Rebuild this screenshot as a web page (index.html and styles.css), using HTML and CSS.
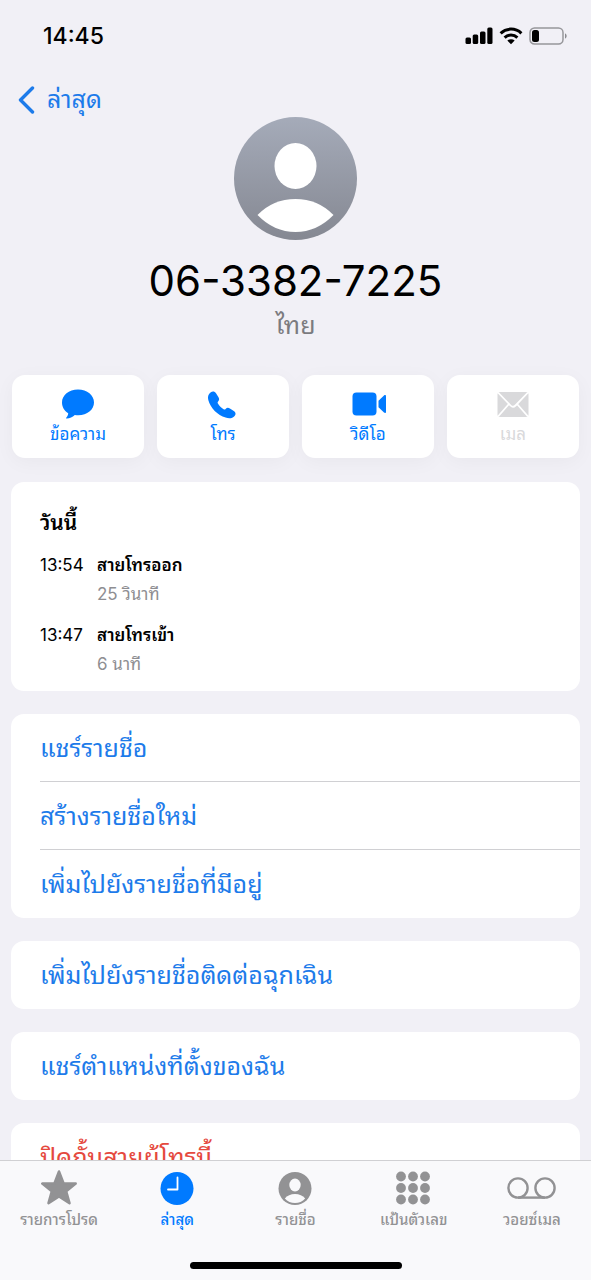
FILE: index.html
```html
<!DOCTYPE html>
<html lang="th">
<head>
<meta charset="utf-8">
<meta name="viewport" content="width=device-width, initial-scale=1">
<title>06-3382-7225</title>
<link rel="stylesheet" href="styles.css">
</head>
<body>
<div class="screen">
  <header class="status">
    <time class="clock">14:45</time>
    <div class="status-icons">
      <svg width="28" height="18" viewBox="0 0 28 18"><rect x="0.500" y="10.500" width="5.500" height="6.500" rx="1.500"/><rect x="7.700" y="7.500" width="5.500" height="9.500" rx="1.500"/><rect x="15" y="4.500" width="5.500" height="12.500" rx="1.500"/><rect x="22.300" y="0.500" width="5.200" height="16.500" rx="1.500"/></svg>
      <svg width="24" height="18" viewBox="0 0 24 18"><g fill="none" stroke="#000" stroke-width="3"><path d="M1.600 6.300a15 15 0 0 1 20.800 0"/><path d="M5.600 10.600a9.200 9.200 0 0 1 12.800 0"/></g><path d="M8.300 13.600a5.400 5.400 0 0 1 7.400 0L12 17.300z"/></svg>
      <svg width="39" height="18" viewBox="0 0 39 18"><rect x="1" y="1" width="33" height="16" rx="4.500" fill="none" stroke="#96969a" stroke-width="1.500"/><rect x="3" y="3" width="7" height="12" rx="2.500"/><path d="M36 6.500c2.200.6 2.200 4.400 0 5z" fill="#8c8c90"/></svg>
    </div>
  </header>

  <main class="content">
    <nav class="nav">
      <a class="back" href="#recents"><svg width="18" height="28" viewBox="0 0 18 28"><path d="M15.500 2 3.500 14l12 12" fill="none" stroke="#1d7bea" stroke-width="3.400" stroke-linecap="round" stroke-linejoin="round"/></svg>ล่าสุด</a>
    </nav>

    <section class="profile">
      <svg class="avatar" viewBox="0 0 123 123"><defs><linearGradient id="shade" x1="0" y1="0" x2="0" y2="1"><stop offset="0" stop-color="#a5abb9"/><stop offset="1" stop-color="#858892"/></linearGradient></defs><circle cx="61.500" cy="61.500" r="61.500" fill="url(#shade)"/><ellipse cx="61.500" cy="49" rx="21" ry="23" fill="#fff"/><path d="M23.500 98Q39 82 61.500 82T99.500 98Q83 115 61.500 115T23.500 98z" fill="#fff"/></svg>
      <h1 class="number">06-3382-7225</h1>
      <p class="country">ไทย</p>
    </section>

    <section class="actions">
      <button class="action" type="button"><svg width="36" height="32" viewBox="0 0 36 32"><path fill="currentColor" d="M18 1.500c9.200 0 16 5.800 16 13s-6.800 12.700-15.700 12.700c-1.200 0-2.400 0-3.500-.3-2.400 2.200-5 3.500-8 3.700-.8 0-1-.6-.4-1.200 1.100-1.300 1.700-2.500 1.800-4.200C4.400 22.900 2 19 2 14.500c0-7.200 6.800-13 16-13z"/></svg>ข้อความ</button>
      <button class="action" type="button"><svg width="36" height="32" viewBox="0 0 36 32"><path fill="currentColor" d="M5.500 4.600C7.600 3 9.700 3.400 11 5.300l2.500 3.900c1 1.700.8 3-.4 4.300-.6.700-.6 1.300-.2 2 1.500 2.500 3.300 4.300 5.700 5.700.8.500 1.400.4 2-.2 1.300-1.300 2.600-1.500 4.300-.5l3.900 2.400c2 1.300 2.300 3.200.8 5-2.100 2.500-5.300 2.900-9 1.700C12.500 27 5.500 20.200 3.300 12 2.500 8.900 3.200 6.300 5.500 4.600z"/></svg>โทร</button>
      <button class="action" type="button"><svg width="36" height="32" viewBox="0 0 36 32"><rect x="2.500" y="4.500" width="24" height="23" rx="4" fill="currentColor"/><path fill="currentColor" d="M28.500 12.800l5.500-5.400c1.100-.9 2-.4 2 .8v15.600c0 1.200-.9 1.700-2 .8l-5.500-5.400z"/></svg>วิดีโอ</button>
      <button class="action" type="button" disabled><svg width="36" height="32" viewBox="0 0 36 32"><rect x="2.500" y="4" width="31" height="25" rx="2.500" fill="currentColor"/><path d="M3 4.500 15.500 17.500q2.500 2.500 5 0L33 4.500M3 28.500 13.500 16.500M33 28.500 22.500 16.500" fill="none" stroke="#fff" stroke-width="1.800"/></svg>เมล</button>
    </section>

    <section class="card log">
      <h2 class="log-title">วันนี้</h2>
      <dl class="calls">
        <dt>13:54</dt>
        <dd><strong>สายโทรออก</strong><span>25 วินาที</span></dd>
        <dt>13:47</dt>
        <dd><strong>สายโทรเข้า</strong><span>6 นาที</span></dd>
      </dl>
    </section>

    <section class="card">
      <button class="row" type="button">แชร์รายชื่อ</button>
      <button class="row" type="button">สร้างรายชื่อใหม่</button>
      <button class="row" type="button">เพิ่มไปยังรายชื่อที่มีอยู่</button>
    </section>
    <section class="card"><button class="row" type="button">เพิ่มไปยังรายชื่อติดต่อฉุกเฉิน</button></section>
    <section class="card"><button class="row" type="button">แชร์ตำแหน่งที่ตั้งของฉัน</button></section>
    <section class="card"><button class="row danger" type="button">ปิดกั้นสายผู้โทรนี้</button></section>
  </main>

  <footer class="dock">
    <nav class="tabs">
      <a class="tab" href="#favorites"><svg width="50" height="36" viewBox="0 0 50 36"><path fill="currentColor" stroke="currentColor" stroke-width="2.500" stroke-linejoin="round" d="M25 1.500L29.500 13.200L41.700 13.600L32.200 21.400L35.500 33.200L25 26.500L14.500 33.200L17.800 21.400L8.300 13.600L20.500 13.200z"/></svg>รายการโปรด</a>
      <a class="tab current" href="#recents" aria-current="page"><svg width="50" height="36" viewBox="0 0 50 36"><circle cx="25" cy="18.500" r="16.500" fill="currentColor"/><path d="M25.500 7.500v12h-9.500" fill="none" stroke="#fff" stroke-width="1.800" stroke-linecap="round" stroke-linejoin="round"/></svg>ล่าสุด</a>
      <a class="tab" href="#contacts"><svg width="50" height="36" viewBox="0 0 50 36"><circle cx="25" cy="18.500" r="16.500" fill="currentColor"/><ellipse cx="25" cy="15" rx="5.700" ry="6.500" fill="#f9f9fb"/><path d="M14.800 28.500Q18.500 24 25 24t10.200 4.500Q31 33 25 33t-10.200-4.500z" fill="#f9f9fb"/></svg>รายชื่อ</a>
      <a class="tab" href="#keypad"><svg width="50" height="36" viewBox="0 0 50 36"><g fill="currentColor"><circle cx="12" cy="6.500" r="4.900"/><circle cx="24" cy="6.500" r="4.900"/><circle cx="36" cy="6.500" r="4.900"/><circle cx="12" cy="18" r="4.900"/><circle cx="24" cy="18" r="4.900"/><circle cx="36" cy="18" r="4.900"/><circle cx="12" cy="29.500" r="4.900"/><circle cx="24" cy="29.500" r="4.900"/><circle cx="36" cy="29.500" r="4.900"/></g></svg>แป้นตัวเลข</a>
      <a class="tab" href="#voicemail"><svg width="50" height="36" viewBox="0 0 50 36"><g fill="none" stroke="currentColor" stroke-width="2.400"><circle cx="11" cy="18" r="9.600"/><circle cx="38" cy="18" r="9.600"/><path d="M11 27.600h27"/></g></svg>วอยซ์เมล</a>
    </nav>
    <div class="home"></div>
  </footer>
</div>
</body>
</html>
```
FILE: styles.css
```css
* { box-sizing: border-box; }
body {
  margin: 0;
  background: #f1f0f6;
  color: #000;
  font-family: Inter, "Noto Sans Thai Looped", Loma, Garuda, "Noto Sans Thai", "Noto Sans", sans-serif;
}
button { border: 0; font: inherit; cursor: pointer; }
a { text-decoration: none; }
h1, h2, p, dl, dd { margin: 0; }
svg { display: block; flex: none; }

.screen { display: flex; flex-direction: column; height: 100vh; }
.status {
  flex: none;
  display: flex;
  align-items: center;
  justify-content: space-between;
  height: 72px;
  padding: 0 23px 0 43px;
}
.clock { font-size: 23px; font-weight: 500; line-height: 28px; }
.status-icons { display: flex; gap: 6px; }

.content {
  flex: 1;
  min-height: 0;
  overflow-y: auto;
  scrollbar-width: none;
  padding: 0 11px;
}
.nav { display: flex; height: 45px; align-items: center; padding: 10px 6px 0; }
.back {
  display: flex;
  align-items: center;
  gap: 12px;
  color: #1d7bea;
  font-size: 25px;
  line-height: 35px;
}

.profile { display: flex; flex-direction: column; align-items: center; }
.avatar { width: 123px; height: 123px; }
.number { margin-top: 15px; font-size: 42px; font-weight: 400; line-height: 52px; }
.country { color: #7b7b7f; font-size: 25px; line-height: 36px; }

.actions { display: grid; grid-template-columns: repeat(4, 1fr); gap: 13px; margin: 32px 1px 24px; }
.action {
  display: flex;
  flex-direction: column;
  align-items: center;
  height: 83px;
  padding: 13px 0 0;
  border-radius: 13px;
  background: #fff;
  box-shadow: 0 4px 20px rgb(0 0 0 / 4%);
  color: #007aff;
  font-size: 17px;
  line-height: 28px;
}
.action:disabled { color: #d9d9db; cursor: default; }

.card { margin-bottom: 23px; border-radius: 13px; background: #fff; overflow: hidden; }
.log { padding: 22px 29px 13px; }
.log-title { font-size: 21px; font-weight: 600; line-height: 38px; }
.calls { display: grid; grid-template-columns: 57px 1fr; row-gap: 13px; margin-top: 9px; line-height: 28px; font-size: 17px; }
.calls strong, .calls span { display: block; }
.calls strong { font-weight: 600; }
.calls span { padding-top: 1px; color: #8e8e92; }

.row {
  display: block;
  position: relative;
  width: 100%;
  height: 68px;
  padding: 0 29px;
  background: none;
  color: #1d7bea;
  font-size: 25px;
  line-height: 36px;
  text-align: left;
}
.row:not(:last-child)::after {
  content: "";
  position: absolute;
  bottom: 0;
  left: 29px;
  right: 0;
  height: 1px;
  background: #d0d0d3;
}
.danger { color: #e5493e; }

.dock { flex: none; padding: 9px 0 11px; border-top: 1px solid #d0d0d3; background: #f9f9fb; }
.tabs { display: grid; grid-template-columns: repeat(5, 1fr); }
.tab {
  display: flex;
  flex-direction: column;
  align-items: center;
  color: #929294;
  font-size: 15px;
  font-weight: 500;
  line-height: 28px;
}
.current { color: #007aff; }
.home { width: 212px; height: 7px; margin: 28px auto 0; border-radius: 4px; background: #000; }
```
